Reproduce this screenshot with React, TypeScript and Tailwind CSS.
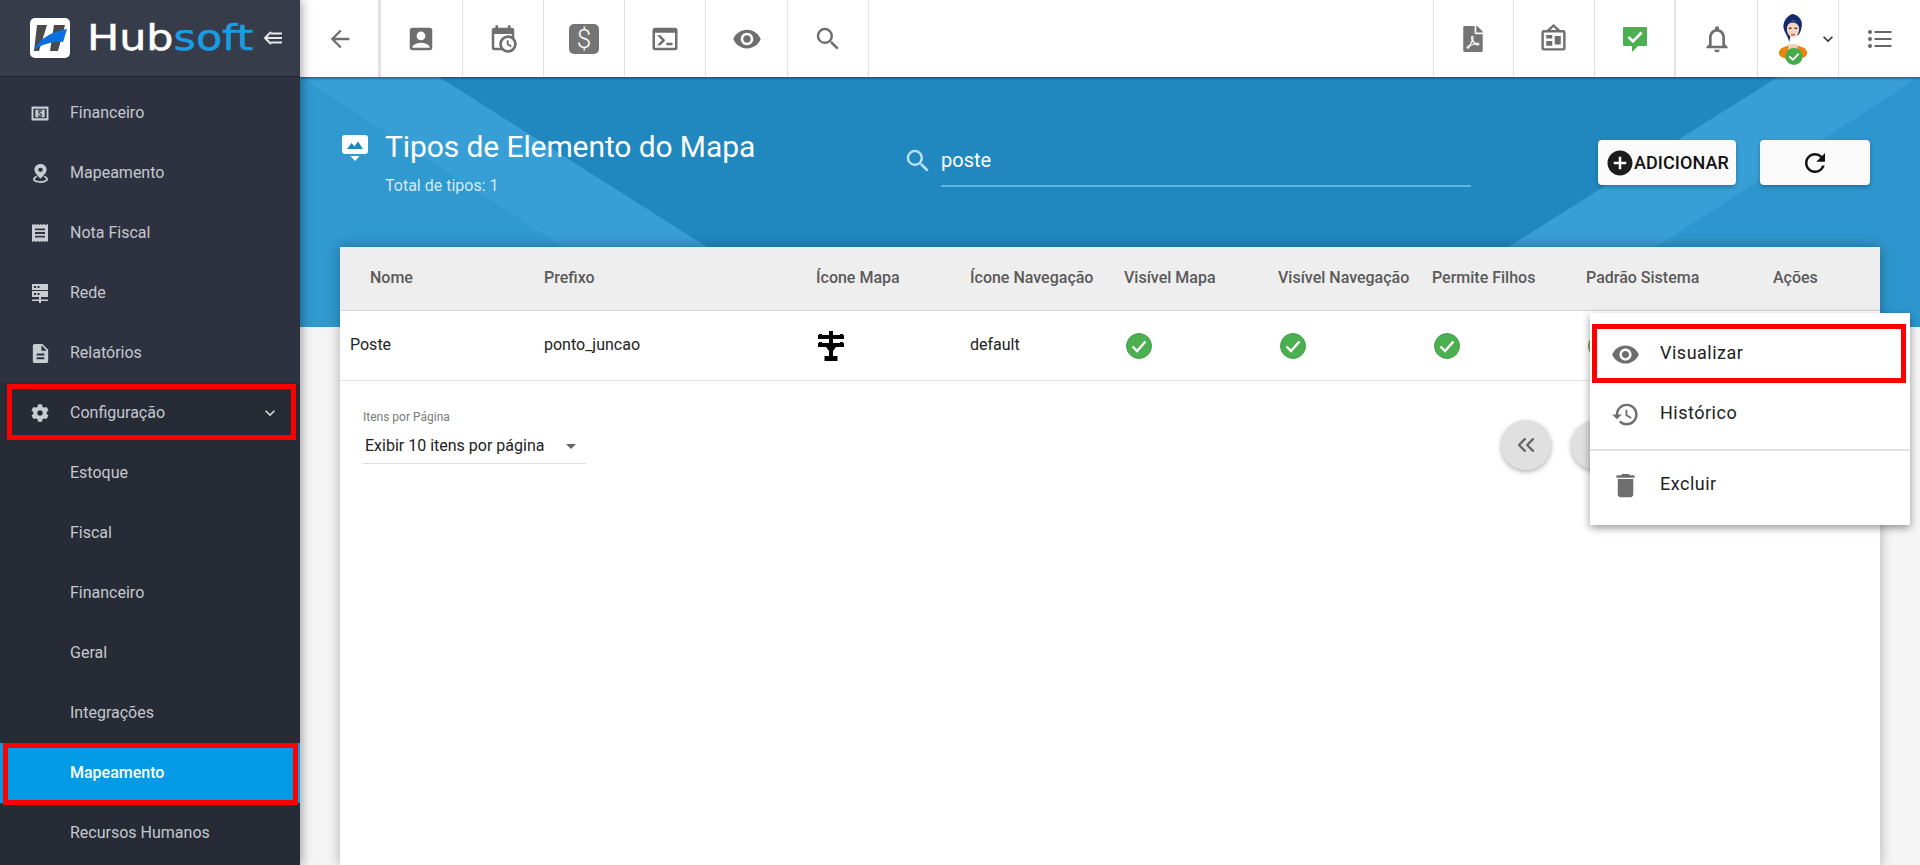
import React from "react";
import {
  MdArrowBack, MdAccountBox, MdVisibility, MdSearch, MdNotificationsNone, MdExpandMore, MdRefresh,
  MdAddCircle, MdDescription, MdHistory, MdDelete, MdArrowDropDown,
} from "react-icons/md";
import { FaFilePdf, FaCog } from "react-icons/fa";
import { FiChevronsLeft } from "react-icons/fi";

const G = "text-[#6e6e6e]";

function MdiPath({ d, className }: { d: string; className?: string }) {
  return (
    <svg viewBox="0 0 24 24" className={className} fill="currentColor">
      <path d={d} />
    </svg>
  );
}

const calendarClock = "M15,13H16.5V15.82L18.94,17.23L18.19,18.53L15,16.69V13M19,8H5V19H9.67C9.24,18.09 9,17.07 9,16A7,7 0 0,1 16,9C17.07,9 18.09,9.24 19,9.67V8M5,21C3.89,21 3,20.1 3,19V5C3,3.89 3.89,3 5,3H6V1H8V3H16V1H18V3H19A2,2 0 0,1 21,5V11.1C22.24,12.36 23,14.09 23,16A7,7 0 0,1 16,23C14.09,23 12.36,22.24 11.1,21H5M16,11.15A4.85,4.85 0 0,0 11.15,16C11.15,18.68 13.32,20.85 16,20.85A4.85,4.85 0 0,0 20.85,16C20.85,13.32 18.68,11.15 16,11.15Z";
const consoleIcon = "M20,19V7H4V19H20M20,3A2,2 0 0,1 22,5V19A2,2 0 0,1 20,21H4A2,2 0 0,1 2,19V5C2,3.89 2.9,3 4,3H20M13,17V15H18V17H13M9.58,13L5.57,9H8.4L11.7,12.3C12.09,12.69 12.09,13.33 11.7,13.72L8.42,17H5.59L9.58,13Z";
const board = "M12.04,2.5L9.53,5H14.53L12.04,2.5M4,7V20H20V7H4M12.04,0L17.5,5H20A2,2 0 0,1 22,7V20A2,2 0 0,1 20,22H4A2,2 0 0,1 2,20V7A2,2 0 0,1 4,5H6.5L12.04,0M6,18V14H11V18H6M13,17V10H18V17H13M6,12V9H11V12H6Z";

function Logo() {
  return (
    <svg viewBox="0 0 40 40" className="w-[40px] h-[40px] shrink-0">
      <rect width="40" height="40" rx="5" fill="#fff" />
      <path d="M7 7H17L9 33H4Z M24 7H35L28 33H20Z" fill="#4a4a4a" />
      <path d="M37 11L33 24C24 23 12 26 4 32C8 22 20 14 37 11Z" fill="#0a6fe0" />
    </svg>
  );
}

function CollapseIcon() {
  return (
    <svg viewBox="0 0 20 16" className="w-[20px] h-[16px]" fill="none" stroke="#e8e8e8" strokeWidth="2">
      <path d="M8 2L2 8L8 14" />
      <path d="M3 8H19M8 3.5H19M8 12.5H19" />
    </svg>
  );
}

function ListIcon() {
  return (
    <svg viewBox="0 0 24 20" className="w-[24px] h-[20px]" fill="#666">
      <circle cx="2" cy="3" r="2" />
      <circle cx="2" cy="10" r="2" />
      <circle cx="2" cy="17" r="2" />
      <rect x="6.5" y="2" width="17" height="2" />
      <rect x="6.5" y="9" width="17" height="2" />
      <rect x="6.5" y="16" width="17" height="2" />
    </svg>
  );
}

function CheckMsg() {
  return (
    <svg viewBox="0 0 26 26" className="w-[26px] h-[26px]">
      <path d="M1 2a1 1 0 0 1 1-1H24a1 1 0 0 1 1 1V19a1 1 0 0 1-1 1H16L10 26V20H2a1 1 0 0 1-1-1Z" fill="#4caf50" />
      <path d="M6.5 11L11 15.5L19.5 6.5" fill="none" stroke="#fff" strokeWidth="2.6" />
    </svg>
  );
}

function Avatar() {
  return (
    <svg viewBox="0 0 40 56" className="w-[38px] h-[53px]">
      <path d="M5 43C5 38 13 35 20 35C27 35 35 38 35 43C35 48 28 50 20 50C12 50 5 48 5 43Z" fill="#e8860f" />
      <path d="M15 34H25V44C22 46 18 46 15 44Z" fill="#f0cdb5" />
      <path d="M20 2C14 3 9 10 10 17C11 22 15 26 16 32L18 22H23L25 25C29 21 30 14 29 10C28 6 24 3 20 2Z" fill="#14296e" />
      <ellipse cx="20" cy="18" rx="6.5" ry="9" fill="#f4d3bd" />
      <path d="M13 16C15 10 23 9 27 16C27 8 14 6 13 16Z" fill="#14296e" />
      <rect x="15.5" y="16.5" width="3" height="1.4" fill="#333" />
      <rect x="21.5" y="16.5" width="3" height="1.4" fill="#333" />
      <rect x="18" y="23.5" width="4" height="1.2" fill="#b03040" />
      <circle cx="21" cy="47" r="9" fill="#43ab49" />
      <path d="M16 47L20 50.5L26 44" fill="none" stroke="#fff" strokeWidth="2" />
    </svg>
  );
}

function BannerIcon() {
  return (
    <svg viewBox="0 0 26 26" className="w-[26px] h-[26px]">
      <path d="M3 0H23a3 3 0 0 1 3 3V16a3 3 0 0 1-3 3H3a3 3 0 0 1-3-3V3a3 3 0 0 1 3-3Z" fill="#fff" />
      <path d="M5 14L9.5 8L12.5 11.5L16 6.5L21 14Z" fill="#1f87bf" />
      <path d="M8.5 21H17.5L13 26Z" fill="#fff" />
    </svg>
  );
}

const IC = "#c9ccd1";

function Cash() {
  return (
    <svg viewBox="0 0 18 16" className="w-[18px] h-[15px]">
      <path fillRule="evenodd" d="M0 0.5H18V15.5H0ZM2 3V13H16V3Z" fill={IC} />
      <rect x="4" y="4" width="10" height="8" fill={IC} />
      <text x="9" y="11.2" textAnchor="middle" fontSize="9" fontWeight="700" fill="#2e3240" fontFamily="Roboto, sans-serif">$</text>
    </svg>
  );
}

function PinBase() {
  return (
    <svg viewBox="0 0 16 22" className="w-[15px] h-[19px]" fill={IC} preserveAspectRatio="none">
      <path fillRule="evenodd" d="M8 0C4 0 1.5 3 1.5 6.5C1.5 10.5 6 15 8 17C10 15 14.5 10.5 14.5 6.5C14.5 3 12 0 8 0ZM8 4.2A2.5 2.5 0 1 1 8 9.2A2.5 2.5 0 1 1 8 4.2Z" />
      <path d="M3.5 13.5C1.5 14.5 0 15.7 0 17.5C0 20.5 4 22 8 22C12 22 16 20.5 16 17.5C16 15.7 14.5 14.5 12.5 13.5L11.4 15C12.8 15.7 14 16.5 14 17.5C14 19 11 20 8 20C5 20 2 19 2 17.5C2 16.5 3.2 15.7 4.6 15Z" />
    </svg>
  );
}

function Receipt() {
  return (
    <svg viewBox="0 0 16 20" className="w-[16px] h-[18px]" fill={IC} preserveAspectRatio="none">
      <path fillRule="evenodd" d="M0 0L1.5 1L3 0L4.5 1L6 0L7.5 1L9 0L10.5 1L12 0L13.5 1L16 0V20L14.5 19L13 20L11.5 19L10 20L8.5 19L7 20L5.5 19L4 20L2.5 19L0 20ZM3 5V7H13V5ZM3 9V11H13V9ZM3 13V15H13V13Z" />
    </svg>
  );
}

function Servers() {
  return (
    <svg viewBox="0 0 16 19" className="w-[16px] h-[19px]" fill={IC}>
      <path fillRule="evenodd" d="M0 0H16V6H0ZM2 2V4H4V2ZM5.5 2V4H7.5V2Z" />
      <path fillRule="evenodd" d="M0 7H16V13H0ZM2 9V11H4V9ZM5.5 9V11H7.5V9Z" />
      <path d="M7 13H9V15.5H16V17H9V19H7V17H0V15.5H7Z" />
    </svg>
  );
}

function PoleIcon() {
  return (
    <svg viewBox="0 0 26 30" className="w-[26px] h-[30px]" fill="#000">
      <rect x="11" y="0" width="4" height="25" />
      <rect x="0" y="4" width="26" height="4" />
      <rect x="0" y="12" width="26" height="4" />
      <path d="M1 3H4V4H1ZM22 3H25V4H22ZM1 11H4V12H1ZM22 11H25V12H22Z" />
      <path d="M8 16H18L15 20H11Z" />
      <rect x="6.5" y="25" width="13" height="5" />
    </svg>
  );
}

function Check({ color = "#4caf50" }: { color?: string }) {
  return (
    <svg viewBox="0 0 26 26" className="w-[26px] h-[26px]">
      <circle cx="13" cy="13" r="12.5" fill={color} stroke="#2e9437" strokeWidth="0.8" />
      <path d="M6.5 13.5L11 18L19.5 8.5" fill="none" stroke="#fff" strokeWidth="2.4" />
    </svg>
  );
}

function TopCell({ children, line = "border-r" }: { children: React.ReactNode; line?: string }) {
  return <div className={`w-[81.3px] h-full flex items-center justify-center border-[#e2e2e2] ${line}`}>{children}</div>;
}

function SideItem({ icon, label, active, box, chevron }: { icon?: React.ReactNode; label: string; active?: boolean; box?: string; chevron?: boolean }) {
  return (
    <div className={`relative h-[60px] shrink-0 flex items-center pl-[70px] text-[16px] ${active ? "bg-[#039be5] text-white font-medium" : "text-[#c5c8cd]"}`}>
      {icon && <span className="absolute left-[28px] w-[24px] h-[24px] flex items-center justify-center">{icon}</span>}
      {label}
      {chevron && <MdExpandMore className="absolute right-[20px] text-[#d5d7da]" size={20} />}
      {box && <span className={`absolute border-[5px] border-[#ff0000] ${box}`} />}
    </div>
  );
}

function MenuItem({ icon, label, box }: { icon: React.ReactNode; label: string; box?: boolean }) {
  return (
    <div className="relative h-[60px] flex items-center text-[18px] tracking-[0.5px] text-[#212121]">
      <span className={`w-[70px] flex justify-center ${G}`}>{icon}</span>
      <span className="pb-[3px]">{label}</span>
      {box && <span className="absolute left-[2px] right-[4px] top-[0px] h-[59px] border-[5px] border-[#ff0000]" />}
    </div>
  );
}

const T = ({ children }: { children: React.ReactNode }) => <span className="pb-[2px]">{children}</span>;

const columns: { label: string; w: string; body?: React.ReactNode }[] = [
  { label: "Nome", w: "w-[174px]" },
  { label: "Prefixo", w: "w-[272px]", body: <T>ponto_juncao</T> },
  { label: "Ícone Mapa", w: "w-[154px]", body: <PoleIcon /> },
  { label: "Ícone Navegação", w: "w-[154px]", body: <T>default</T> },
  { label: "Visível Mapa", w: "w-[154px]", body: <Check /> },
  { label: "Visível Navegação", w: "w-[154px]", body: <Check /> },
  { label: "Permite Filhos", w: "w-[154px]", body: <Check /> },
  { label: "Padrão Sistema", w: "w-[187px]", body: <Check color="#e0953a" /> },
  { label: "Ações", w: "w-[107px]" },
];

export default function App() {
  return (
    <div className="flex w-[1920px] h-[865px] overflow-hidden bg-[#f5f5f5] font-['Roboto',sans-serif]">
      <aside className="w-[300px] shrink-0 flex flex-col bg-[#272b36] z-20 overflow-hidden shadow-[2px_0_10px_rgba(0,0,0,0.35)]">
        <div className="h-[77px] shrink-0 flex items-center pl-[30px] bg-[#373c4a] border-b border-[#23262f]">
          <Logo />
          <span className="ml-[17px] w-[166px] shrink-0 text-[36px] leading-none font-['DejaVu_Sans',sans-serif] text-white origin-left scale-x-[1.19] whitespace-nowrap [-webkit-text-stroke:0.5px_currentColor]">
            Hub<span className="text-[#189ce2]">soft</span>
          </span>
          <span className="ml-[10px] flex">
            <CollapseIcon />
          </span>
        </div>
        <div className="flex flex-col bg-[#2e3240] pt-[6px]">
          <SideItem label="Financeiro" icon={<Cash />} />
          <SideItem label="Mapeamento" icon={<PinBase />} />
          <SideItem label="Nota Fiscal" icon={<Receipt />} />
          <SideItem label="Rede" icon={<Servers />} />
          <SideItem label="Relatórios" icon={<MdDescription className="text-[#c9ccd1]" size={23} />} />
        </div>
        <SideItem label="Configuração" icon={<FaCog className="text-[#c9ccd1]" size={18} />} chevron box="left-[7px] right-[4px] top-[1px] h-[56px]" />
        <SideItem label="Estoque" />
        <SideItem label="Fiscal" />
        <SideItem label="Financeiro" />
        <SideItem label="Geral" />
        <SideItem label="Integrações" />
        <SideItem label="Mapeamento" active box="left-[3px] right-[2px] top-[0px] h-[62px]" />
        <SideItem label="Recursos Humanos" />
      </aside>

      <main className="relative flex-1 min-w-0 flex flex-col">
        <header className="h-[77px] shrink-0 flex justify-between bg-white shadow-[0_1px_3px_rgba(0,0,0,0.5)] z-10">
          <div className="flex h-full">
            <TopCell line="border-r-[3px]"><MdArrowBack className={`${G} ml-[2px]`} size={28} /></TopCell>
            <TopCell><MdAccountBox className={`${G} mt-[1px]`} size={30} /></TopCell>
            <TopCell><MdiPath d={calendarClock} className={`w-[30px] h-[30px] mt-[1px] ${G}`} /></TopCell>
            <TopCell>
              <span className="w-[30px] h-[30px] rounded-[5px] bg-[#757575] text-white text-[26px] leading-[30px] font-light text-center mt-[1px]">$</span>
            </TopCell>
            <TopCell><MdiPath d={consoleIcon} className={`w-[30px] h-[30px] mt-[1px] ${G}`} /></TopCell>
            <TopCell><MdVisibility className={G} size={30} /></TopCell>
            <TopCell><MdSearch className={G} size={30} /></TopCell>
          </div>
          <div className="flex h-full">
            <TopCell line="border-x"><FaFilePdf className="text-[#757575]" size={26} /></TopCell>
            <TopCell><MdiPath d={board} className={`w-[29px] h-[29px] ${G}`} /></TopCell>
            <TopCell line="border-r-[2px]"><CheckMsg /></TopCell>
            <TopCell><MdNotificationsNone className={G} size={32} /></TopCell>
            <div className="w-[81.3px] h-full flex items-center pl-[16px] border-r border-[#e2e2e2]">
              <Avatar />
              <MdExpandMore className="text-[#333] ml-[6px] shrink-0" size={20} />
            </div>
            <div className="w-[81px] h-full flex items-center justify-center"><ListIcon /></div>
          </div>
        </header>

        <section className="relative h-[250px] shrink-0 bg-[#2088bf] overflow-hidden">
          <svg viewBox="0 0 1620 250" className="absolute inset-0 w-[1620px] h-[250px]">
            <polygon points="139,0 407,170 0,170 0,0" fill="#379fd5" />
            <polygon points="0,0 263,170 263,250 0,250" fill="#3099d0" />
            <polygon points="1478,0 1208,170 1357,170 1620,0" fill="#379fd5" />
            <polygon points="1620,0 1357,170 1300,250 1620,250" fill="#2e96ce" />
          </svg>
          <div className="relative flex items-start pl-[42px] pr-[50px] pt-[52px]">
            <div className="w-[43px] pt-[6px]"><BannerIcon /></div>
            <div className="w-[505px] shrink-0">
              <div className="text-[30px] leading-[36px] text-white tracking-[-0.1px]">Tipos de Elemento do Mapa</div>
              <div className="mt-[12px] text-[16px] leading-[18px] text-[#d5eaf6]">Total de tipos: 1</div>
            </div>
            <div className="flex items-start ml-[13px] pt-[15px]">
              <MdSearch className="text-[#b9e0f4] shrink-0 mr-[8px] mt-[2px]" size={30} />
              <div className="w-[530px] h-[43px] border-b-2 border-[#5fb3e2] text-[20px] leading-[32px] text-white">poste</div>
            </div>
            <div className="ml-auto flex gap-[24px] pt-[11px]">
              <div className="w-[138px] h-[45px] rounded-[4px] bg-[#fafafa] shadow-[0_2px_4px_rgba(0,0,0,0.25)] flex items-center justify-center text-[18px] font-medium text-[#111] tracking-[0.1px]">
                <MdAddCircle className="text-[#1c1c1c] -mr-[1px]" size={30} />ADICIONAR
              </div>
              <div className="w-[110px] h-[45px] rounded-[4px] bg-[#fafafa] shadow-[0_2px_4px_rgba(0,0,0,0.25)] flex items-center justify-center">
                <MdRefresh className="text-[#111]" size={30} />
              </div>
            </div>
          </div>
        </section>

        <section className="relative mx-[40px] -mt-[80px] flex-1 bg-white shadow-[0_0_12px_rgba(0,0,0,0.3)]">
          <div className="flex h-[64px] pb-[2px] items-center bg-[#eeeeee] border-b border-[#d6d6d6] pl-[30px] text-[16px] font-medium text-[#5a5a5a]">
            {columns.map((c) => (
              <div key={c.label} className={`${c.w} shrink-0`}>{c.label}</div>
            ))}
          </div>
          <div className="relative flex h-[70px] items-center border-b border-[#e3e3e3] pl-[10px] text-[16px] text-[#222]">
            {columns.map((c, i) => (
              <div key={c.label} className={`shrink-0 flex items-center ${i === 0 ? "w-[194px]" : c.w} ${i > 1 && c.label !== "Ícone Navegação" ? "pl-[2px]" : ""}`}>
                {i === 0 ? <T>Poste</T> : c.body}
              </div>
            ))}
          </div>
          <div className="flex justify-between items-start pl-[23px] pt-[28px]">
            <div className="w-[223px] border-b border-[#dddddd] h-[55px]">
              <div className="text-[12px] leading-[16px] text-[#7a7a7a]">Itens por Página</div>
              <div className="mt-[9px] flex items-center justify-between pl-[2px] text-[16px] leading-[20px] text-[#222]">
                Exibir 10 itens por página
                <MdArrowDropDown className="text-[#666] mr-[3px]" size={24} />
              </div>
            </div>
            <div className="flex gap-[20px] mr-[259px] mt-[11px]">
              <div className="w-[50px] h-[50px] rounded-full bg-[#e0e0e0] shadow-[0_2px_5px_rgba(0,0,0,0.3)] flex items-center justify-center">
                <FiChevronsLeft className="text-[#666]" size={28} />
              </div>
              <div className="w-[50px] h-[50px] rounded-full bg-[#e0e0e0] shadow-[0_2px_5px_rgba(0,0,0,0.3)]" />
            </div>
          </div>
        </section>

        <div className="absolute left-[1290px] top-[313px] w-[320px] h-[212px] bg-white shadow-[0_3px_8px_rgba(0,0,0,0.4)] pt-[11px] z-20">
          <MenuItem box icon={<MdVisibility size={29} />} label="Visualizar" />
          <MenuItem icon={<MdHistory size={29} />} label="Histórico" />
          <div className="h-[2px] bg-[#e3e3e3] mt-[5px]" />
          <div className="mt-[4px]"><MenuItem icon={<MdDelete size={31} />} label="Excluir" /></div>
        </div>
      </main>
    </div>
  );
}
